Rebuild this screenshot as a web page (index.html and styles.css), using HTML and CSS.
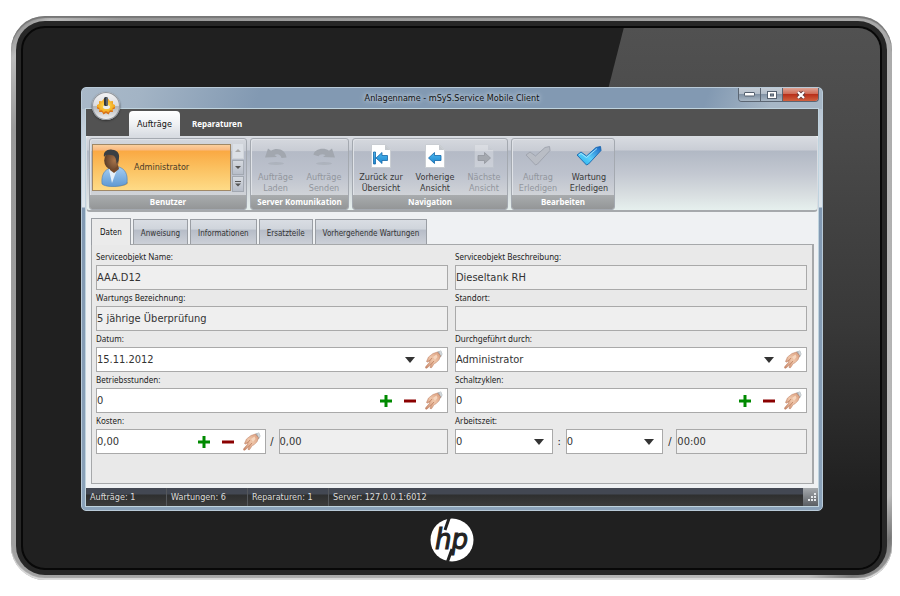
FILE: index.html
```
<!DOCTYPE html>
<html lang="de">
<head>
<meta charset="utf-8">
<title>Anlagenname - mSyS.Service Mobile Client</title>
<link rel="stylesheet" href="styles.css">
</head>
<body>
<svg class="defs" aria-hidden="true">
  <defs>
    <linearGradient id="skin" x1="1" y1="0" x2="0" y2="1"><stop offset="0" stop-color="#d99c7c"/><stop offset=".5" stop-color="#efc5a8"/><stop offset="1" stop-color="#c98768"/></linearGradient>
    <linearGradient id="blue" x1="0" y1="0" x2="0" y2="1"><stop offset="0" stop-color="#4db8ee"/><stop offset="1" stop-color="#1c86cf"/></linearGradient>
    <linearGradient id="check" x1="0" y1="1" x2="1" y2="0"><stop offset="0" stop-color="#1aa8e8"/><stop offset=".45" stop-color="#5cd0fb"/><stop offset="1" stop-color="#1762c4"/></linearGradient>
    <radialGradient id="face" cx=".7" cy=".5" r=".7"><stop offset="0" stop-color="#a8744a"/><stop offset="1" stop-color="#5a3c27"/></radialGradient>
    <linearGradient id="shirt" x1="0" y1="0" x2="0" y2="1"><stop offset="0" stop-color="#a5cdf2"/><stop offset="1" stop-color="#5f99d3"/></linearGradient>
    <radialGradient id="gear"><stop offset="0" stop-color="#ffe45c"/><stop offset="1" stop-color="#f2a51b"/></radialGradient>
  </defs>
  <symbol id="hand" viewBox="0 0 18 19">
    <path d="M12.500 1.500 16 .5l1.500 3.500-1.500 3-2 .5-2.500-3z" fill="#a9b2b8"/>
    <path d="M14 1.500l2-.5 1 3-1 2z" fill="#d3d9dc"/>
    <path d="M12.500 2 8 3.500 3.500 7 1.500 11.500l1.500.7 1-1.700.3 2L.8 16.500.5 18l1.300.2L6 14.500l-1 3 1.500.2 2.800-4.200 1.700-.7 3-3 1.500-4z" fill="url(#skin)" stroke="#b9795c" stroke-width=".5"/>
    <path d="M4.500 11 7 8M6 14.500l3-3.500" stroke="#a86547" stroke-width=".6" fill="none"/>
    <path d="M8 7l3.500-2.500L12.500 7l-2.500 3z" fill="#f6d6be"/>
  </symbol>
  <symbol id="plus" viewBox="0 0 14 14"><path d="M5.500 1h3v4.500H13v3H8.500V13h-3V8.500H1v-3h4.500z" fill="#008a00"/></symbol>
  <symbol id="minus" viewBox="0 0 14 14"><path d="M1 5.500h12v3H1z" fill="#8a0000"/></symbol>
  <symbol id="down" viewBox="0 0 10 6"><path d="M0 0h10L5 6z" fill="#333"/></symbol>
  <symbol id="page" viewBox="0 0 20 24"><path d="M.5.5h14l5 5v18H.5z" fill="#fff" stroke="#c9cdd2"/><path d="M14 .5v5.500h5.500z" fill="#c4c8cd"/></symbol>
  <symbol id="tick" viewBox="0 0 26 20"><path d="M1 9 5 6l5.500 4L20 1.500 24.500.5l.5 4L12.500 18l-2 1z"/></symbol>
</svg>
<main class="device">
  <div class="bezel">
    <div class="face">
      <section class="window">
        <header class="titlebar">
          <h1>Anlagenname - mSyS.Service Mobile Client</h1>
          <div class="captions">
            <button type="button" aria-label="Minimieren"><svg width="11" height="5" viewBox="0 0 11 5"><rect x=".5" y=".5" width="10" height="3.500" rx=".5" fill="#fff" stroke="#54606f"/></svg></button>
            <button type="button" aria-label="Maximieren"><svg width="10" height="8" viewBox="0 0 10 8"><rect x=".5" y=".5" width="9" height="7" fill="#fff" stroke="#54606f"/><rect x="3.500" y="3" width="3" height="2" fill="#8a97a5" stroke="#54606f"/></svg></button>
            <button type="button" class="close" aria-label="Schließen"><svg width="10" height="8" viewBox="0 0 10 8"><path d="M2 1 8 7M8 1 2 7" stroke="#6a3a3a" stroke-width="4"/><path d="M2 1 8 7M8 1 2 7" stroke="#fff" stroke-width="2.200"/></svg></button>
          </div>
        </header>
        <button type="button" class="orb" aria-label="Menü">
          <svg width="20" height="20" viewBox="0 0 20 20">
            <path d="M1 10l2.500-1.200L3 6l3 .3L7.500 4l2.500 1.500L12.500 4 14 6.300l3-.3-.5 2.800L19 10v2.500l-2.500 1L17 16l-3 0-1.500 2.500-2.500-1.500-2.500 1.500L6 16H3l.5-2.500L1 12.500z" fill="#d9741a"/>
            <path d="M1 9l2.500-1.200L3 5l3 .3L7.500 3l2.500 1.500L12.500 3 14 5.300l3-.3-.5 2.800L19 9v2l-2.500 1L17 14.500l-3-.2-1.500 2.200-2.500-1.500-2.500 1.500L6 14.300l-3 .2.500-2.500L1 11z" fill="url(#gear)"/>
            <ellipse cx="10.500" cy="11" rx="3.500" ry="2" fill="#e8edf0"/><rect x="8" y="1" width="4" height="9" rx="1.500" fill="#353b40"/><rect x="10.500" y="1.500" width="1" height="8" fill="#8a9298"/>
          </svg>
        </button>
        <div class="client">
          <nav class="ribbon-tabs">
            <button type="button" class="active">Aufträge</button>
            <button type="button">Reparaturen</button>
          </nav>
          <div class="ribbon">
            <section class="group">
              <div class="gallery">
                <button type="button" class="user">
                  <svg width="28" height="38" viewBox="0 0 28 38">
                    <ellipse cx="15" cy="34" rx="12" ry="3.500" fill="#8a6a30" opacity=".45"/>
                    <path d="M1 35C0 25 4 21 9 19l9-1c6 2 9 7 8 16-3 4-21 5-25 1z" fill="url(#shirt)" stroke="#4a7fb8" stroke-width=".6"/>
                    <path d="M8 21 11 34l5.500-15-4-1z" fill="#e4f0fa"/>
                    <path d="M9 17l8-1 1 4-5 4-4-3z" fill="#74492b"/>
                    <ellipse cx="10.500" cy="11.500" rx="7.300" ry="9" fill="url(#face)"/>
                    <path d="M3 8C2 3 6 0 11 .7c6 .3 9 5 6 12l-1.500 2c0-4-1-7-3-8.200C9 5.500 5 5 3 8z" fill="#3a3f43"/>
                  </svg>
                  Administrator
                </button>
                <div class="scroller">
                  <button type="button" class="off" aria-label="Nach oben"><svg width="6" height="3" viewBox="0 0 6 3"><path d="M0 3 3 0l3 3z"/></svg></button>
                  <button type="button" aria-label="Nach unten"><svg width="6" height="3" viewBox="0 0 6 3"><path d="M0 0h6L3 3z"/></svg></button>
                  <button type="button" aria-label="Mehr"><svg width="6" height="6" viewBox="0 0 6 6"><path d="M0 0h6v1H0zM0 2.500h6L3 5.500z"/></svg></button>
                </div>
              </div>
              <h2>Benutzer</h2>
            </section>
            <section class="group">
              <div class="tools server">
                <button type="button" disabled><svg width="26" height="24" viewBox="0 0 26 24"><ellipse cx="13" cy="19.500" rx="8" ry="1.500" fill="#a2a7af" opacity=".5"/><path d="M2 13.500 5 4.500l3 2.200c6-4 15-1 15.500 6.800l-5 .5c-1-3.500-4-4.500-7-3l2.500 2z" fill="#a2a7af"/></svg><span>Aufträge<br>Laden</span></button>
                <button type="button" disabled><svg width="26" height="24" viewBox="0 0 26 24"><ellipse cx="13" cy="19.500" rx="8" ry="1.500" fill="#a2a7af" opacity=".5"/><path d="M24 13.500 21 4.500l-3 2.200c-6-4-15-1-15.500 4l5 1.500c1-2 4-2.700 7-1.200l-2.500 2z" fill="#a2a7af"/></svg><span>Aufträge<br>Senden</span></button>
              </div>
              <h2>Server Komunikation</h2>
            </section>
            <section class="group">
              <div class="tools navi">
                <button type="button"><svg width="20" height="24" viewBox="0 0 20 24"><use href="#page"/><path d="M2.500 8h2v12h-2zM5 14l6-5.500v3h5.500v5H11v3z" fill="url(#blue)" stroke="#1467a8" stroke-width=".8"/></svg><span>Zurück zur<br>Übersicht</span></button>
                <button type="button"><svg width="20" height="24" viewBox="0 0 20 24"><use href="#page"/><path d="M3.500 14l6-5.500v3H16v5H9.500v3z" fill="url(#blue)" stroke="#1467a8" stroke-width=".8"/></svg><span>Vorherige<br>Ansicht</span></button>
                <button type="button" disabled><svg width="20" height="24" viewBox="0 0 20 24"><use href="#page" opacity=".25"/><path d="M16.500 14l-6-5.500v3H4v5h6.500v3z" fill="#a4a8af" stroke="#92969d" stroke-width=".8"/></svg><span>Nächste<br>Ansicht</span></button>
              </div>
              <h2>Navigation</h2>
            </section>
            <section class="group">
              <div class="tools edit">
                <button type="button" disabled><svg width="26" height="20" viewBox="0 0 26 20"><use href="#tick" fill="#b9bdc5" stroke="#9da2ab" stroke-width=".9"/></svg><span>Auftrag<br>Erledigen</span></button>
                <button type="button"><svg width="26" height="20" viewBox="0 0 26 20"><use href="#tick" fill="url(#check)" stroke="#1866ad" stroke-width=".9"/><path d="M3 9 5 7.500l5.500 4L21 2.500" fill="none" stroke="#b4ecff" stroke-width=".8"/></svg><span>Wartung<br>Erledigen</span></button>
              </div>
              <h2>Bearbeiten</h2>
            </section>
          </div>
          <div class="content">
            <nav class="tabs">
              <button type="button" class="active">Daten</button>
              <button type="button">Anweisung</button>
              <button type="button">Informationen</button>
              <button type="button">Ersatzteile</button>
              <button type="button">Vorhergehende Wartungen</button>
            </nav>
            <form class="panel">
              <div class="cell"><label for="name">Serviceobjekt Name:</label><div class="field ro"><input id="name" value="AAA.D12" readonly></div></div>
              <div class="cell"><label for="desc">Serviceobjekt Beschreibung:</label><div class="field ro"><input id="desc" value="Dieseltank RH" readonly></div></div>
              <div class="cell"><label for="job">Wartungs Bezeichnung:</label><div class="field ro"><input id="job" value="5 jährige Überprüfung" readonly></div></div>
              <div class="cell"><label for="place">Standort:</label><div class="field ro"><input id="place" value="" readonly></div></div>
              <div class="cell"><label for="date">Datum:</label><div class="field"><input id="date" value="15.11.2012"><button type="button" aria-label="Kalender"><svg width="10" height="6"><use href="#down"/></svg></button><button type="button" aria-label="Eingabehilfe"><svg width="18" height="19"><use href="#hand"/></svg></button></div></div>
              <div class="cell"><label for="by">Durchgeführt durch:</label><div class="field"><div class="picker"><select id="by"><option>Administrator</option></select><svg width="10" height="6"><use href="#down"/></svg></div><button type="button" aria-label="Eingabehilfe"><svg width="18" height="19"><use href="#hand"/></svg></button></div></div>
              <div class="cell"><label for="hours">Betriebsstunden:</label><div class="field"><input id="hours" value="0"><button type="button" aria-label="Mehr"><svg width="14" height="14"><use href="#plus"/></svg></button><button type="button" aria-label="Weniger"><svg width="14" height="14"><use href="#minus"/></svg></button><button type="button" aria-label="Eingabehilfe"><svg width="18" height="19"><use href="#hand"/></svg></button></div></div>
              <div class="cell"><label for="cycles">Schaltzyklen:</label><div class="field"><input id="cycles" value="0"><button type="button" aria-label="Mehr"><svg width="14" height="14"><use href="#plus"/></svg></button><button type="button" aria-label="Weniger"><svg width="14" height="14"><use href="#minus"/></svg></button><button type="button" aria-label="Eingabehilfe"><svg width="18" height="19"><use href="#hand"/></svg></button></div></div>
              <div class="cell"><label for="cost">Kosten:</label><div class="split"><div class="field"><input id="cost" value="0,00"><button type="button" aria-label="Mehr"><svg width="14" height="14"><use href="#plus"/></svg></button><button type="button" aria-label="Weniger"><svg width="14" height="14"><use href="#minus"/></svg></button><button type="button" aria-label="Eingabehilfe"><svg width="18" height="19"><use href="#hand"/></svg></button></div><span>/</span><div class="field ro"><input aria-label="Kosten gesamt" value="0,00" readonly></div></div></div>
              <div class="cell"><label for="h">Arbeitszeit:</label><div class="split"><div class="field"><div class="picker"><select id="h"><option>0</option></select><svg width="10" height="6"><use href="#down"/></svg></div></div><span>:</span><div class="field"><div class="picker"><select aria-label="Minuten"><option>0</option></select><svg width="10" height="6"><use href="#down"/></svg></div></div><span>/</span><div class="field ro total"><input aria-label="Arbeitszeit gesamt" value="00:00" readonly></div></div></div>
            </form>
          </div>
          <footer class="status">
            <span>Aufträge: 1</span><span>Wartungen: 6</span><span>Reparaturen: 1</span><span>Server: 127.0.0.1:6012</span>
            <svg class="grip" width="15" height="18" viewBox="0 0 15 18"><path d="M11 5h2v2h-2zM8 8h2v2H8zM11 8h2v2h-2zM5 11h2v2H5zM8 11h2v2H8zM11 11h2v2h-2z" fill="#e6e9ec"/></svg>
          </footer>
        </div>
      </section>
      <svg class="logo" width="44" height="44" viewBox="0 0 44 44" role="img" aria-label="hp">
        <circle cx="22" cy="22" r="21.500" fill="#fff"/>
        <path d="M15 12 19.500-1M22 31l-5 14" stroke="#222" stroke-width="3"/>
        <text x="5" y="31">hp</text>
      </svg>
    </div>
  </div>
</main>
</body>
</html>
```
FILE: styles.css
```
* { box-sizing: border-box; }
body {
  margin: 0;
  min-height: 100vh;
  display: flex;
  background: #fff;
  font: 9px/11px "DejaVu Sans Condensed", Tahoma, sans-serif;
  color: #1e1e1e;
}
.defs { position: absolute; width: 0; height: 0; }
button, input, select { font: inherit; color: inherit; border: 0; background: none; padding: 0; margin: 0; min-width: 0; }
h1, h2 { margin: 0; font: inherit; }

.device {
  flex: 1;
  display: flex;
  margin: 16px 8px 16px 11px;
  padding: 5px;
  border-radius: 34px;
  background: linear-gradient(135deg, #777 0, #bbb 3%, #999 8%, #a5a5a5 50%, #bbb 94%, #777 97%, #aaa 100%);
  box-shadow: inset 0 2px 1px #777, inset 0 -2px 1px #ddd;
}
.bezel {
  flex: 1;
  display: flex;
  padding: 5px;
  border-radius: 29px;
  background: #272727;
}
.face {
  position: relative;
  flex: 1;
  display: flex;
  flex-direction: column;
  align-items: center;
  gap: 7px;
  padding: 59px 57px 6px 58px;
  border: 2px solid #080808;
  border-radius: 24px;
  background: #202020;
  overflow: hidden;
}
.face::before {
  content: "";
  position: absolute;
  inset: 0 0 0 54%;
  clip-path: polygon(35% 0, 100% 0, 100% 100%, 0 100%);
  background: linear-gradient(#515151, #4a4a4a 20%, #383838 55%, #202020 86%);
}
.logo { position: relative; display: block; }
.logo text { font: italic 29px "DejaVu Sans Condensed", sans-serif; fill: #222; stroke: #222; stroke-width: 1; }

.window {
  position: relative;
  align-self: stretch;
  flex: 1;
  display: flex;
  flex-direction: column;
  padding: 0 3px 3px;
  border: 1px solid #b9cad8;
  border-radius: 5px;
  background:
    linear-gradient(110deg, #a9b9c9, #a3b4c5 8%, #8299b2 24%, #8299b2 84%, #a7b7c6 93%) top / 100% 21px no-repeat,
    linear-gradient(#a9b9c9, #c4cfda 40px, #dfe7ee 119px, #8299b2 120px, #8ba2b9);
}
.titlebar { display: grid; grid-template-columns: 1fr auto 1fr; height: 20px; }
h1 {
  grid-column: 2;
  line-height: 21px;
  color: #111;
  text-shadow: 0 0 4px #d5dee7, 0 0 6px #c5d0dc;
}
.captions {
  justify-self: end;
  align-self: start;
  display: flex;
  height: 14px;
  border: 1px solid #5b6673;
  border-top: 0;
  border-radius: 0 0 4px 4px;
  overflow: hidden;
}
.captions button {
  width: 22px;
  display: flex;
  align-items: center;
  justify-content: center;
  border-right: 1px solid #5b6673;
  background: linear-gradient(#c3ccd5, #b2bdc9 45%, #8293a5 50%, #a9b7c5);
}
.captions .close { width: 35px; border: 0; background: linear-gradient(#dea394, #cf6a55 45%, #b8301a 50%, #d1613f); }
.orb {
  position: absolute;
  left: 10px;
  top: 4px;
  width: 28px;
  height: 28px;
  display: flex;
  align-items: center;
  justify-content: center;
  border-radius: 50%;
  background: linear-gradient(#f5f5f6, #dcdde0 48%, #b3b5b9 52%, #f4f4f4);
  box-shadow: 0 0 0 1px #8f959c inset, 0 1px 2px #333;
}
.client {
  flex: 1;
  display: flex;
  flex-direction: column;
  border: 1px solid #bfd3de;
  background: #eff1f3;
}

.ribbon-tabs {
  display: flex;
  align-items: flex-end;
  height: 27px;
  padding-left: 43px;
  background: #525252;
  font: bold 8px/11px "Noto Sans", sans-serif;
  color: #fff;
}
.ribbon-tabs button { height: 25px; padding: 0 12px; }
.ribbon-tabs .active {
  padding: 2px 8px 0;
  font: 9px/11px "DejaVu Sans Condensed", sans-serif;
  color: #111;
  border-radius: 4px 4px 0 0;
  background: linear-gradient(#fff, #f0f2f4 50%, #d8dce2);
}
.ribbon {
  display: flex;
  gap: 3px;
  height: 76px;
  padding: 1px 2px 0;
  border: 1px solid #d9dde2;
  border-width: 1px 1px 2px;
  border-bottom-color: #a6a9ac;
  border-radius: 4px;
  background: linear-gradient(#d8dbe1, #c9cdd5 18%, #b1b8c4 19%, #c3c8d1 50%, #d9dfe1 80%, #e6f0ee);
}
.group {
  display: flex;
  flex-direction: column;
  border: 1px solid #a4a9b0;
  border-radius: 3px;
  background: linear-gradient(#d5d8de, #c8ccd4 17%, #b4bac6 18%, #bdc2cd 50%, #d0d3d8 80%);
  box-shadow: inset 1px 1px 0 #dfe2e7;
  overflow: hidden;
}
h2 {
  padding: 0 6px;
  font: bold 8px/14px "Noto Sans", sans-serif;
  text-align: center;
  color: #fff;
  background: linear-gradient(#a9acae, #949697);
}
.gallery { flex: 1; display: flex; padding: 4px 2px 3px; gap: 1px; }
.user {
  width: 139px;
  margin: 1px 0;
  display: flex;
  align-items: center;
  gap: 5px;
  padding: 0 8px;
  border: 1px solid #a08866;
  color: #4a3a28;
  background: linear-gradient(#fbcf9d, #f9b980 5px, #faa943 6px, #fbc05f 50%, #fedb87);
}
.scroller { display: flex; flex-direction: column; width: 12px; gap: 1px; }
.scroller button { flex: 1; display: flex; align-items: center; justify-content: center; border: 1px solid #a2a8b1; background: linear-gradient(#d5d9df, #b7bdc8); fill: #555; }
.scroller .off { border-color: #d0d4da; background: #dce0e6; fill: #aaa; }
.tools { flex: 1; display: grid; }
.server { grid-template-columns: 49px 48px; }
.navi { grid-template-columns: 56px 52px 46px; }
.edit { grid-template-columns: 52px 50px; }
.tools button { display: flex; flex-direction: column; align-items: center; justify-content: flex-end; color: #383838; white-space: nowrap; }
.tools button > svg { margin: auto 0; }
.tools button:disabled { color: #92969d; }
.tools button span { padding-bottom: 1px; }

.content { flex: 1; display: flex; flex-direction: column; padding: 6px 4px 4px 5px; }
.tabs { display: flex; align-items: flex-end; gap: 2px; height: 27px; font-size: 8px; }
.tabs button {
  height: 26px;
  padding: 2px 7px 0;
  border: 1px solid #9a9ea4;
  border-bottom: 0;
  color: #333;
  background: linear-gradient(#d9dde3, #d0d5dc 35%, #b7bdc8 42%, #cdd1d8);
}
.tabs .active { position: relative; z-index: 1; height: 27px; padding: 0 8px; color: #111; background: #ebebeb; }
.panel {
  flex: 1;
  display: grid;
  grid-template-columns: 1fr 1fr;
  column-gap: 7px;
  align-content: start;
  margin-top: -1px;
  padding: 4px 5px 20px 4px;
  border: 1px solid #a6a8aa;
  border-right-width: 2px;
  background: #e9e9e9;
}
.cell { display: flex; flex-direction: column; min-width: 0; }
.cell label { font: 8px/16px "Noto Sans", sans-serif; }
.field {
  flex: 1;
  display: flex;
  min-width: 0;
  height: 25px;
  padding-right: 1px;
  border: 1px solid #a9a9a9;
  background: #fff;
  font-size: 11px;
}
.field.ro { background: #efefef; }
.field input { flex: 1; width: 100%; color: #333; outline: 0; }
.field button { width: 24px; display: flex; align-items: center; justify-content: center; }
.picker { position: relative; flex: 1; display: flex; }
.picker select { flex: 1; appearance: none; color: #333; }
.picker svg { position: absolute; right: 7px; top: 9px; pointer-events: none; }
.cell > .field { flex: none; }
.split { display: flex; }
.split > span { width: 13px; text-align: center; font-size: 11px; line-height: 25px; }
.split .total { flex: 1 1 36px; }

.status {
  display: flex;
  height: 18px;
  line-height: 18px;
  color: #dcdcdc;
  background: linear-gradient(#434853 6px, #2e2f2f 7px, #3c3c3c);
}
.status span { min-width: 81px; padding-left: 4px; border-left: 1px solid #55585c; white-space: nowrap; }
.status span:first-child { border: 0; min-width: 80px; }
.grip { margin-left: auto; background: linear-gradient(#a5a9ad, #5a5e63); }
```
